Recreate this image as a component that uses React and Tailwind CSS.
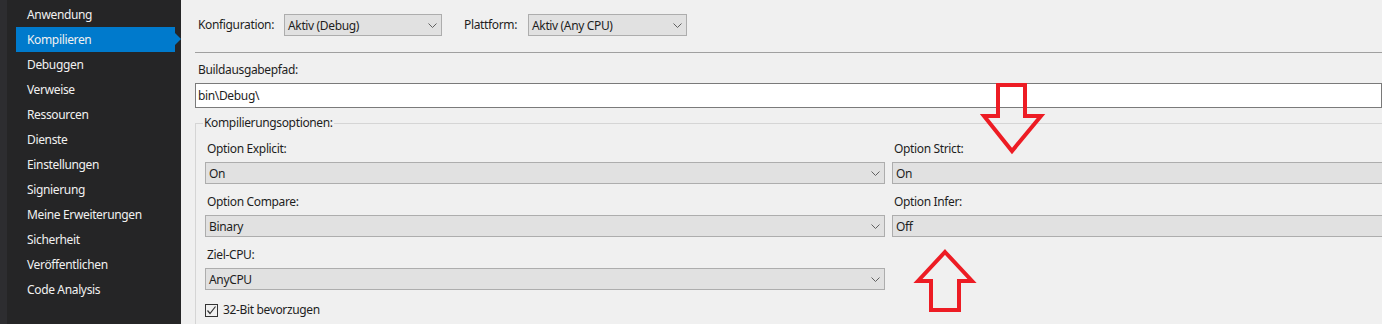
import React from 'react';

const font = { fontFamily: '"Noto Sans", "Open Sans", sans-serif', letterSpacing: '-0.35px' };

const navItems = [
  'Anwendung',
  'Kompilieren',
  'Debuggen',
  'Verweise',
  'Ressourcen',
  'Dienste',
  'Einstellungen',
  'Signierung',
  'Meine Erweiterungen',
  'Sicherheit',
  'Veröffentlichen',
  'Code Analysis',
];

function Chevron() {
  return (
    <svg width="9" height="5" viewBox="0 0 9 5" className="shrink-0">
      <path d="M0.5 0.5 L4.5 4.5 L8.5 0.5" fill="none" stroke="#606060" strokeWidth="1" />
    </svg>
  );
}

function Select({ value, className = '', chevron = true }) {
  return (
    <div className={`h-[22px] flex items-center justify-between border border-[#adadad] bg-[#e1e1e1] pl-[3px] pr-[4px] ${className}`}>
      <span className="pt-[2px] text-[12px] text-[#1e1e1e] leading-none">{value}</span>
      {chevron && <Chevron />}
    </div>
  );
}

function Field({ label, value, className = '', chevron = true }) {
  return (
    <div className="flex flex-col">
      <div className="h-[16px] pl-[2px] text-[12px] leading-[16px] text-[#1e1e1e]">{label}</div>
      <Select value={value} chevron={chevron} className={`mt-[5px] ${className}`} />
    </div>
  );
}

export default function App() {
  return (
    <div className="relative flex w-[1382px] h-[324px] overflow-hidden bg-[#f0f0f0]" style={font}>
      {/* sidebar */}
      <div className="flex w-[181px] shrink-0 bg-[#252526]">
        <div className="w-[7px] bg-[#2d2d30]" />
        <div className="flex-1 pt-[2px]">
          {navItems.map(item => {
            const active = item === 'Kompilieren';
            return (
              <div key={item} className={`relative h-[25px] flex items-center ml-[9px] w-[159px] pl-[11px] text-[12px] text-[#f1f1f1] ${active ? 'bg-[#007acc]' : ''}`}>
                {item}
                {active && <span className="absolute right-[-6px] top-[6px] w-0 h-0 border-y-[6px] border-y-transparent border-l-[6px] border-l-[#007acc]" />}
              </div>
            );
          })}
        </div>
      </div>

      {/* main */}
      <div className="flex-1 flex flex-col pl-[14px] min-w-0">
        <div className="mt-[14px] h-[22px] flex items-center text-[12px] text-[#1e1e1e]">
          <span className="ml-[3px] w-[86px]">Konfiguration:</span>
          <Select value="Aktiv (Debug)" className="w-[158px]" />
          <span className="ml-[22px] w-[64px]">Plattform:</span>
          <Select value="Aktiv (Any CPU)" className="w-[159px]" />
        </div>

        <div className="mt-[16px] h-px bg-[#a0a0a0]" />

        <div className="mt-[9px] ml-[3px] h-[16px] text-[12px] leading-[16px] text-[#1e1e1e]">Buildausgabepfad:</div>
        <div className="mt-[5px] h-[25px] flex items-center bg-white border border-[#7a7a7a] pl-[2px] text-[12px] text-[#1e1e1e]">
          bin\Debug\
        </div>

        <fieldset className="mt-[7px] flex-1 border-t border-l border-[#d5d5d5]">
          <legend className="ml-[7px] px-px text-[12px] leading-[16px] text-[#1e1e1e]">Kompilierungsoptionen:</legend>
          <div className="pl-[9px]">
            <div className="mt-[10px] grid grid-cols-[680px_680px] gap-x-[7px] gap-y-[10px]">
              <Field label="Option Explicit:" value="On" />
              <Field label="Option Strict:" value="On" chevron={false} />
              <Field label="Option Compare:" value="Binary" />
              <Field label="Option Infer:" value="Off" chevron={false} />
              <Field label="Ziel-CPU:" value="AnyCPU" />
            </div>
            <div className="mt-[11px] flex items-center gap-[5px] text-[12px] text-[#1e1e1e]">
              <svg width="13" height="13" viewBox="0 0 13 13">
                <rect x="0.5" y="0.5" width="12" height="12" fill="#f0f0f0" stroke="#333333" />
                <path d="M2.5 6.5 L5 9.5 L10.5 2.5" fill="none" stroke="#333333" strokeWidth="1.2" />
              </svg>
              <span>32-Bit bevorzugen</span>
            </div>
          </div>
        </fieldset>
      </div>

      {/* red annotation arrows */}
      <svg className="absolute left-0 top-0 pointer-events-none" width="1382" height="324">
        <polygon points="998,85 1025,85 1025,116 1041,116 1012,151 984,116 998,116" fill="none" stroke="#ed1c24" strokeWidth="4" strokeLinejoin="miter" />
        <polygon points="945,252 972,281 959,281 959,310 931,310 931,281 918,281" fill="none" stroke="#ed1c24" strokeWidth="4" strokeLinejoin="miter" />
      </svg>
    </div>
  );
}
